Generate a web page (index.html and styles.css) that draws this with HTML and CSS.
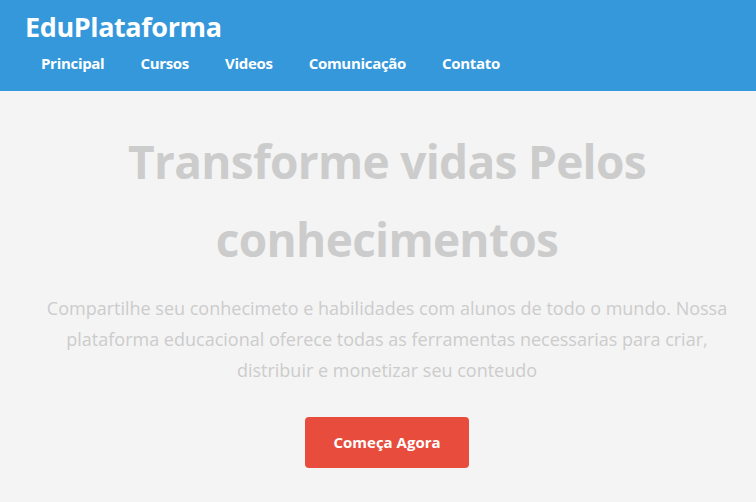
FILE: index.html
```html
<!DOCTYPE html>
<html lang="pt">
<head>
<meta charset="utf-8">
<title>EduPlataforma</title>
<link rel="stylesheet" href="styles.css">
</head>
<body>
<header class="header">
  <div class="logo">EduPlataforma</div>
  <nav class="nav">
    <a href="#">Principal</a>
    <a href="#">Cursos</a>
    <a href="#">Videos</a>
    <a href="#">Comunicação</a>
    <a href="#">Contato</a>
  </nav>
</header>
<main class="hero">
  <h1 class="hero-title">Transforme vidas Pelos conhecimentos</h1>
  <p class="hero-text">Compartilhe seu conhecimeto e habilidades com alunos de todo o mundo. Nossa plataforma educacional oferece todas as ferramentas necessarias para criar, distribuir e monetizar seu conteudo</p>
  <a class="btn" href="#">Começa Agora</a>
</main>
</body>
</html>
```
FILE: styles.css
```css
* { box-sizing: border-box; }
body {
  margin: 0;
  font-family: "Open Sans", "Noto Sans", sans-serif;
  background: #f4f4f4;
}
.header {
  background: #3498db;
  color: #fff;
  padding: 10px 25px 16px;
  height: 91px;
}
.logo {
  font-size: 27px;
  font-weight: 700;
  line-height: 34px;
  letter-spacing: -0.4px;
}
.nav {
  display: flex;
  gap: 36px;
  padding-left: 16px;
  margin-top: 8px;
}
.nav a {
  color: #fff;
  text-decoration: none;
  font-weight: 700;
  font-size: 15px;
  line-height: 22px;
  letter-spacing: -0.3px;
}
.hero {
  display: flex;
  flex-direction: column;
  align-items: center;
  text-align: center;
  padding: 31px 10px 0 28px;
}
.hero-title {
  margin: 0;
  color: #cccccc;
  font-size: 46px;
  line-height: 78px;
  font-weight: 700;
  max-width: 560px;
  letter-spacing: -0.7px;
}
.hero-text {
  margin: 15px 0 0;
  color: #cccccc;
  font-size: 18px;
  line-height: 31px;
  max-width: 700px;
}
.btn {
  margin-top: 31px;
  background: #e74c3c;
  color: #fff;
  text-decoration: none;
  font-weight: 700;
  font-size: 15px;
  padding: 14px 0;
  border-radius: 4px;
  width: 164px;
  height: 51px;
  line-height: 23px;
}
```
